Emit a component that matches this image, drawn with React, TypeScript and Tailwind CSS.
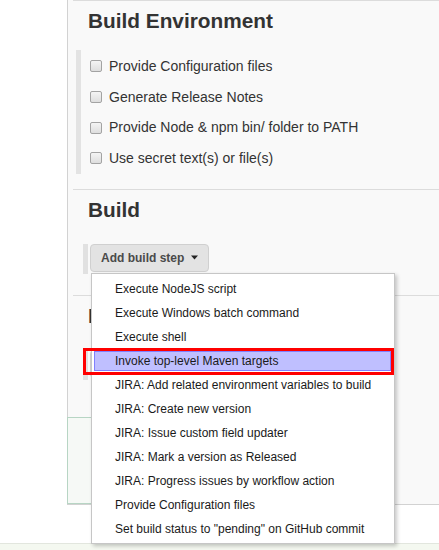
import { ReactNode } from "react";

const envOptions = [
  "Provide Configuration files",
  "Generate Release Notes",
  "Provide Node & npm bin/ folder to PATH",
  "Use secret text(s) or file(s)",
];

const buildSteps = [
  "Execute NodeJS script",
  "Execute Windows batch command",
  "Execute shell",
  "Invoke top-level Maven targets",
  "JIRA: Add related environment variables to build",
  "JIRA: Create new version",
  "JIRA: Issue custom field updater",
  "JIRA: Mark a version as Released",
  "JIRA: Progress issues by workflow action",
  "Provide Configuration files",
  "Set build status to \"pending\" on GitHub commit",
];

const Section = ({
  title,
  children,
  grow,
}: {
  title: string;
  children: ReactNode;
  grow?: boolean;
}) => (
  <div className={`border-t border-[#dcdcdc] pt-[8px] ${grow ? "flex-1" : ""}`}>
    <h2 className="ml-[15px] h-[24px] text-[20.8px] font-bold leading-[24px] text-[#333]">
      {title}
    </h2>
    {children}
  </div>
);

const AddButton = ({ label }: { label: string }) => (
  <div className="mt-[22px] mb-[21px] flex items-start gap-[2px] pl-[10px]">
    <div className="h-[30px] w-[5px] bg-[#e1e1e1]" />
    <button className="flex h-[28px] items-center gap-[7px] rounded-[4px] border border-[#d0d0d0] bg-[#e3e3e3] pl-[10px] pr-[10px] text-[12px] font-bold text-[#4a4a4a]">
      {label}
      <svg width="7" height="5" viewBox="0 0 7 5">
        <path d="M0 0.5h7L3.5 4.5z" fill="#222" />
      </svg>
    </button>
  </div>
);

export default function App() {
  return (
    <div className="relative flex h-[550px] w-[439px] flex-col overflow-hidden bg-white font-['Liberation_Sans',Arial,sans-serif]">
      <div className="flex h-[505px]">
        <div className="w-[67px]" />
        <div className="flex flex-1 flex-col border-b border-l border-[#d2d2d2] bg-[#f9f9f9] pl-[5px]">
          {/* Build Environment */}
          <Section title="Build Environment">
            <div className="mt-[17px] mb-[15px] flex pl-[3px]">
              <div className="w-[5px] bg-[#e3e3e3]" />
              <div className="flex flex-col pt-[1px] pl-[9px]">
                {envOptions.map((opt) => (
                  <label
                    key={opt}
                    className="flex h-[30.7px] items-center gap-[7px] text-[14px] text-[#333]"
                  >
                    <span className="h-[12px] w-[12px] rounded-[2px] border border-[#a3a3a3] bg-gradient-to-b from-[#f4f4f4] to-[#dedede]" />
                    {opt}
                  </label>
                ))}
              </div>
            </div>
          </Section>

          {/* Build */}
          <Section title="Build">
            <AddButton label="Add build step" />
          </Section>

          {/* Post-build */}
          <Section title="Post-build Actions" grow>
            <AddButton label="Add post-build action" />
          </Section>
        </div>
      </div>
      <div className="h-[38px]" />
      <div className="flex-1 border-t border-[#e2e6de] bg-[#f4f8f0]" />

      {/* sticky save bar */}
      <div className="absolute left-[67px] top-[417px] h-[87px] w-[260px] border border-[#b7d5c4] bg-[#f6f9f6]" />

      {/* dropdown menu */}
      <div className="absolute left-[91px] top-[273px] w-[304px] border border-[#c6c6c6] bg-white pt-[3px] pb-[2px] shadow-[2px_2px_4px_rgba(0,0,0,0.22)]">
        {buildSteps.map((step, i) =>
          i === 3 ? (
            <div key={step} className="flex h-[24px] py-[2px] pl-[2px] pr-[3px]">
              <div className="flex flex-1 items-center border border-[#8080ff] bg-[#bfbfff] pl-[20px] text-[12px] text-[#1a1a1a]">
                {step}
              </div>
            </div>
          ) : (
            <div
              key={step}
              className="flex h-[24px] items-center pl-[23px] text-[12px] text-[#1a1a1a]"
            >
              {step}
            </div>
          ),
        )}
      </div>

      {/* highlight outline */}
      <div className="absolute left-[83px] top-[348px] h-[27px] w-[311px] border-[3px] border-[#ff0000]" />
    </div>
  );
}
